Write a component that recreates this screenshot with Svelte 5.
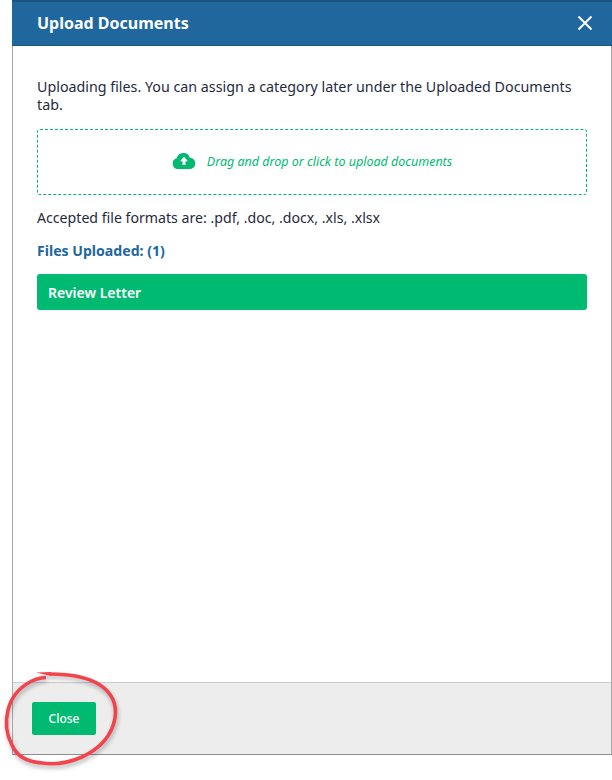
<script>
  const files = ['Review Letter'];
  const ring = 'M50 14C68 14 86 16 100 25C112 33 117 45 115 58C112 75 101 88 82 97C68 103 54 105 42 103C28 102 17 97 12 85C6 74 5 62 8 50C11 38 19 28 30 22C35 19 40 18 46 17.500';
</script>

<div class="page">
  <div class="dialog">
    <header class="head">
      <h1>Upload Documents</h1>
      <svg class="x" width="16" height="16" viewBox="0 0 16 16"><path d="M1.500 1.500l13 13M14.500 1.500l-13 13" stroke="#fff" stroke-width="2" fill="none"/></svg>
    </header>
    <main class="body">
      <p class="intro">Uploading files. You can assign a category later under the Uploaded Documents tab.</p>
      <div class="drop">
        <svg width="24" height="16" viewBox="0 0 24 16"><path d="M6 16a5.500 5.500 0 0 1-1.300-10.800A6.500 6.500 0 0 1 11.500 0a6.500 6.500 0 0 1 6.300 4.700A5.700 5.700 0 0 1 18.500 16z" fill="#00ba71"/><path d="M12 3.800l4 4.400h-2.500v3.800h-3V8.200H8z" fill="#fff"/></svg>
        <em>Drag and drop or click to upload documents</em>
      </div>
      <p class="formats">Accepted file formats are: .pdf, .doc, .docx, .xls, .xlsx</p>
      <h2>Files Uploaded: (1)</h2>
      {#each files as f}
        <div class="file">{f}</div>
      {/each}
    </main>
    <footer class="foot">
      <button>Close</button>
    </footer>
  </div>
  <svg class="ring" width="130" height="120" viewBox="0 0 130 120">
    <path d="M36 12.500L51 12.100L51 15.900Z" fill="#f2444c"/>
    <path d={ring} fill="none" stroke="#f2444c" stroke-width="3.600"/>
  </svg>
</div>

<style>
  :global(body) { margin: 0; background: #fff; }
  .page { position: relative; width: 612px; height: 780px; overflow: hidden; font-family: "Noto Sans", sans-serif; }
  .dialog { margin-left: 12px; width: 600px; height: 755px; box-sizing: border-box; border-left: 1px solid #aaa; border-right: 1px solid #a4a4a4; border-bottom: 1px solid #8f8f8f; display: flex; flex-direction: column; }
  .head { height: 46px; box-sizing: border-box; flex: none; margin-left: -1px; margin-right: -1px; background: #20679d; border-top: 2px solid #1c5480; border-bottom: 1px solid #1c5480; display: flex; align-items: center; justify-content: space-between; padding: 0 19px 1px 25px; color: #fff; }
  h1 { margin: 0; font-size: 16px; font-weight: 700; }
  .x { display: block; }
  .body { flex: 1; padding: 32px 24px 0 24px; }
  .intro { margin: 0; font-size: 14.27px; line-height: 18px; color: #1f2a3c; }
  .drop { margin-top: 15px; height: 66px; box-sizing: border-box; border: 1px dashed #00ba71; border-radius: 3px; display: flex; align-items: center; justify-content: center; gap: 11px; color: #00ba71; font-size: 12.5px; padding-bottom: 2px; }
  .formats { margin: 13px 0 0; font-size: 14.15px; line-height: 19px; color: #1f2a3c; }
  h2 { margin: 14px 0 0; font-size: 14.1px; line-height: 19px; font-weight: 700; color: #20679d; }
  .file { margin-top: 14px; height: 36px; line-height: 38px; border-radius: 3px; background: #00ba71; color: #fff; font-size: 14px; font-weight: 600; padding-left: 11px; }
  .foot { height: 72px; flex: none; box-sizing: border-box; background: #ededed; border-top: 1px solid #ccc; padding: 19px; }
  button { display: block; width: 64px; height: 33px; padding: 0; border: 0; border-radius: 2px; background: #00ba71; color: #fff; font: 500 12px "Noto Sans", sans-serif; }
  .ring { position: absolute; left: 0; top: 660px; filter: drop-shadow(1px 3px 2px rgba(0,0,0,.28)); }
</style>
